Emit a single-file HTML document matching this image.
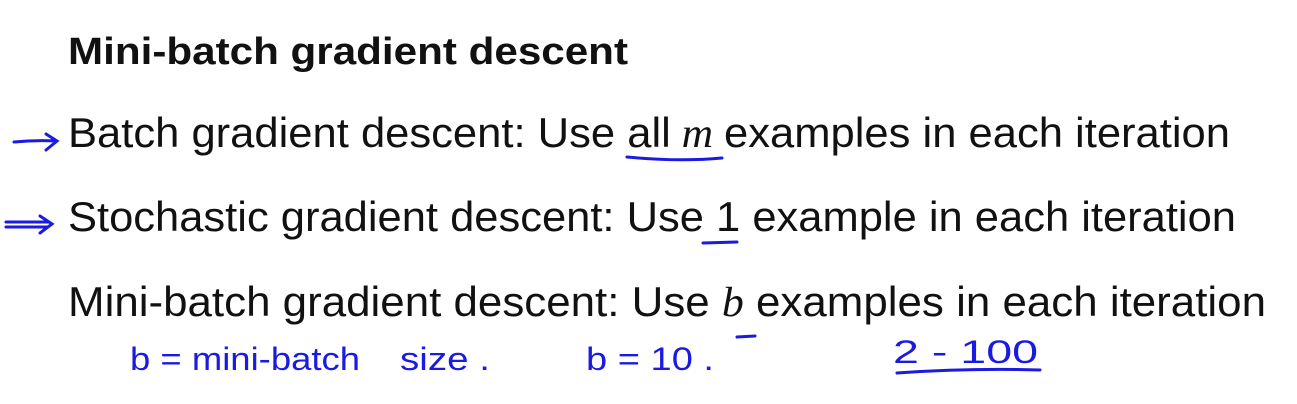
<!DOCTYPE html>
<html><head><meta charset="utf-8"><style>
html,body{margin:0;padding:0;background:#fff;width:1297px;height:404px;overflow:hidden}
svg{display:block}
text{font-family:"Liberation Sans",sans-serif;fill:#111}
.h{fill:#1a1ae0;font-size:32px}
</style></head><body>
<svg width="1297" height="404" viewBox="0 0 1297 404">
<text x="68" y="64" font-size="38" font-weight="bold" textLength="560" lengthAdjust="spacingAndGlyphs">Mini-batch gradient descent</text>
<text x="68" y="147" font-size="42" textLength="1162" lengthAdjust="spacingAndGlyphs">Batch gradient descent: Use all<tspan font-family="Liberation Serif" font-style="italic"> m </tspan>examples in each iteration</text>
<text x="68" y="231" font-size="42" textLength="1168" lengthAdjust="spacingAndGlyphs">Stochastic gradient descent: Use 1 example in each iteration</text>
<text x="68" y="316" font-size="42" textLength="1198" lengthAdjust="spacingAndGlyphs">Mini-batch gradient descent: Use <tspan font-family="Liberation Serif" font-style="italic">b</tspan> examples in each iteration</text>
<g stroke="#1a1ae0" stroke-width="3" fill="none" stroke-linecap="round">
<path d="M14 142 Q35 140 56 141 M46 134 L57 141 L46 150"/>
<path d="M6 222 L48 222 M6 227 L48 227 M40 216 L52 224 L40 233"/>
<path d="M627 157 Q680 162 722 158"/>
<path d="M703 243 L737 242"/>
<path d="M737 337 L755 336"/>
<path d="M897 373 Q970 368 1040 370"/>
</g>
<text class="h" x="130" y="370" textLength="230" lengthAdjust="spacingAndGlyphs">b = mini-batch</text>
<text class="h" x="400" y="370" textLength="90" lengthAdjust="spacingAndGlyphs">size .</text>
<text class="h" x="586" y="370" textLength="128" lengthAdjust="spacingAndGlyphs">b = 10 .</text>
<text class="h" x="893" y="363" textLength="145" lengthAdjust="spacingAndGlyphs">2 - 100</text>
</svg>
</body></html>
